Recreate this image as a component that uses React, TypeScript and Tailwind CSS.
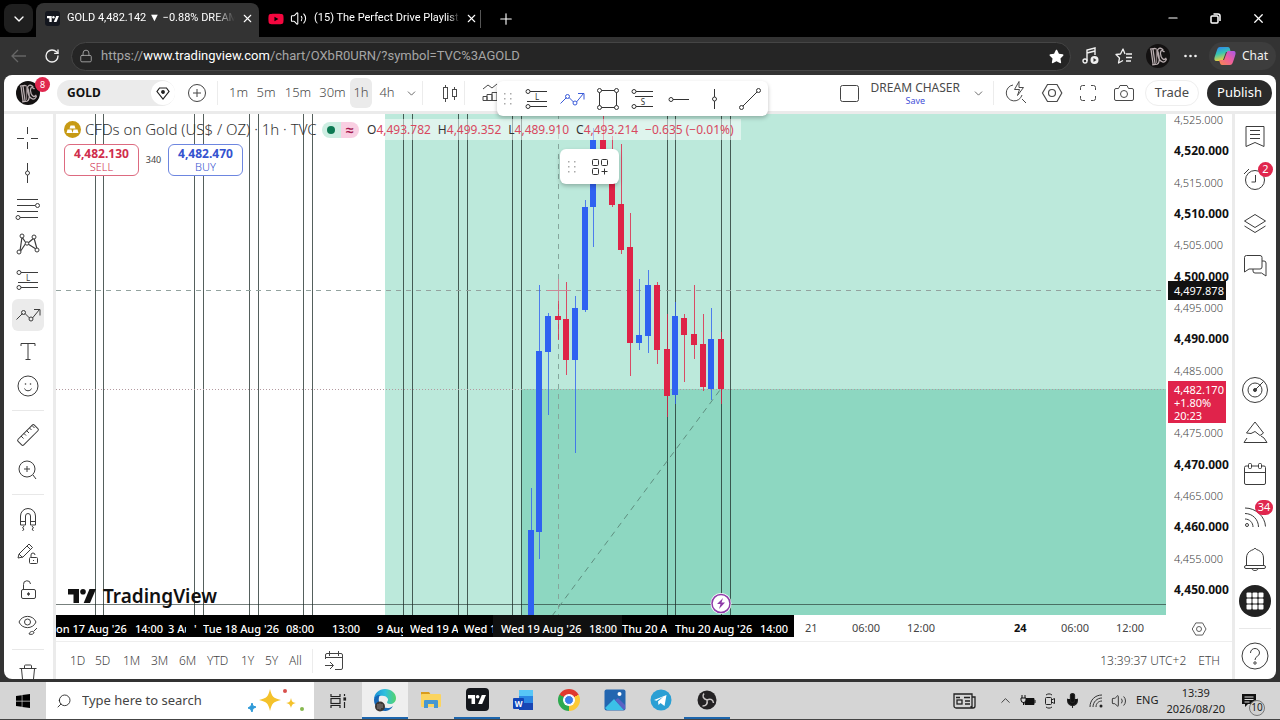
import React from 'react';
import { FaChrome, FaStar, FaWindows, FaYoutube } from 'react-icons/fa';
import { ChevronDown, ChevronUp, Lock, Mic, Minus, Plus, RotateCw, Search, Volume2, X } from 'lucide-react';

interface IconProps {
  size?: number;
  className?: string;
  children: React.ReactNode;
}

// 28-unit grid, same as the drawing tool icons
const Icon: React.FC<IconProps> = ({ size = 28, className, children }) => (
  <svg
    width={size}
    height={size}
    viewBox="0 0 28 28"
    fill="none"
    stroke="currentColor"
    strokeWidth="1"
    className={className}
    aria-hidden="true"
  >
    {children}
  </svg>
);

const CrosshairIcon = () => (
  <Icon><path d="M13.500 3v7M13.500 18v7M3 14.500h7M17 14.500h7" /></Icon>
);

const VerticalLineIcon = () => (
  <Icon><path d="M13.500 4v8M13.500 16v8" /><circle cx="13.500" cy="14" r="2" /></Icon>
);

const HorizontalLineIcon = () => (
  <Icon><path d="M8 14.500h16" /><circle cx="6" cy="14.500" r="2" /></Icon>
);

const TrendLineIcon = () => (
  <Icon><path d="M7 21L21 7" /><circle cx="5.5" cy="22.500" r="2" /><circle cx="22.500" cy="5.5" r="2" /></Icon>
);

const FibIcon = () => (
  <Icon>
    <path d="M3 4.500h21M3 10.500h18M3 16.500h21M6 22.500h18" />
    <circle cx="23.500" cy="10.500" r="2" fill="white" />
    <circle cx="4" cy="22.500" r="2" fill="white" />
  </Icon>
);

const PatternIcon = () => (
  <Icon>
    <path d="M8 7L6 21M8 7l4 6M12 13l-6 9M14 13l6-5M14 14l8 5M20 8l3 11" strokeWidth="1.200" />
    <circle cx="8" cy="6" r="2" fill="white" />
    <circle cx="20" cy="7" r="2" fill="white" />
    <circle cx="13" cy="13.500" r="1.700" fill="white" />
    <circle cx="5" cy="22" r="2" fill="white" />
    <circle cx="23" cy="20" r="2" fill="white" />
  </Icon>
);

const PositionIcon: React.FC<{ letter: string }> = ({ letter }) => (
  <Icon>
    <path d={letter === 'L' ? 'M6 6.500h18M4 16.500h20M6 21.500h18' : 'M6 6.500h18M6 11.500h18M6 21.500h18'} />
    <circle cx="5" cy="6.500" r="2" fill="white" />
    <circle cx="5" cy="21.500" r="2" fill="white" />
    <text
      x="14"
      y={letter === 'L' ? 14.500 : 19.500}
      fontSize="8"
      textAnchor="middle"
      fill="currentColor"
      stroke="none"
      className="font-['Noto_Sans']"
    >
      {letter}
    </text>
  </Icon>
);

const PathIcon = () => (
  <Icon>
    <path d="M2.500 18.500l6-6M11 12.500l4.500 4.500M18.500 17l7-8.500M20 8.500h6v6" />
    <circle cx="9.500" cy="11.500" r="2" />
    <circle cx="17" cy="18" r="2" />
  </Icon>
);

const RectIcon = () => (
  <Icon>
    <path d="M5.500 7v14M22.500 7v14M7 5.500h14M7 22.500h14" />
    <circle cx="5.500" cy="5.500" r="2" fill="white" />
    <circle cx="22.500" cy="5.500" r="2" fill="white" />
    <circle cx="5.500" cy="22.500" r="2" fill="white" />
    <circle cx="22.500" cy="22.500" r="2" fill="white" />
  </Icon>
);

const TextIcon = () => (
  <Icon><path d="M7 9V6.500h14V9M14 6.500v16M11.500 22.500h5" /></Icon>
);

const SmileIcon = () => (
  <Icon>
    <circle cx="14" cy="14" r="10" />
    <path d="M10.500 16.500c1 3 6 3 7 0" />
    <circle cx="11.500" cy="12" r="0.800" fill="currentColor" stroke="none" />
    <circle cx="16.500" cy="12" r="0.800" fill="currentColor" stroke="none" />
  </Icon>
);

const RulerIcon = () => (
  <Icon>
    <rect x="2.500" y="10" width="23" height="8" rx="1.500" transform="rotate(-45 14 14)" />
    <path d="M7 15l2.500 2.500M10 12.500l2 2M12.500 9.500l2.500 2.500M15.500 7l2 2M18 4.500l2.500 2.500" />
  </Icon>
);

const ZoomIcon = () => (
  <Icon><circle cx="13" cy="13" r="8" /><path d="M13 10v6M10 13h6M19 19l3 4" /></Icon>
);

const MagnetIcon = () => (
  <Icon>
    <path d="M6.500 20v-9a7.500 7.500 0 0115 0v9h-5v-9a2.500 2.500 0 00-5 0v9zM6.500 16.500h5M16.500 16.500h5M10 21l-1.500 2 1.500 1-1.500 2M18 21l1.500 2-1.500 1 1.500 2" />
  </Icon>
);

const PencilLockIcon = () => (
  <Icon>
    <path d="M4 18l1-4L15 4l3.500 3.500L9 17zM13 6l3.500 3.500M5 14l3.500 3.500" />
    <rect x="15.500" y="17.500" width="8" height="6" rx="1" />
    <path d="M17 17v-2a2 2 0 014 0M19.500 20v1" />
  </Icon>
);

const UnlockIcon = () => (
  <Icon>
    <rect x="7.500" y="13.500" width="14" height="9" rx="1.500" />
    <path d="M9.500 13V8.500a3.500 3.500 0 017-.500M14.500 16.500v3" />
    <circle cx="14.500" cy="18" r="1" fill="currentColor" />
  </Icon>
);

const EyeIcon = () => (
  <Icon>
    <path d="M5 11c3-7.500 14-7.500 17 0-3 7.500-14 7.500-17 0zM15 23c1-3 4-3 5-2 0 2-2 3-5 2zM20 20l3-3" />
    <circle cx="13.500" cy="11" r="3" />
  </Icon>
);

const TrashIcon = () => (
  <Icon><path d="M5.500 8.500h17M7.500 9l1.500 15h10L20.500 9M10.500 8V6a1 1 0 011-1h5a1 1 0 011 1v2" /></Icon>
);

const WatchlistIcon = () => (
  <Icon><path d="M5 4.500h18v20l-9-4-9 4zM9 8.500h10M9 12.500h10M9 16.500h10" /></Icon>
);

const AlarmIcon = () => (
  <Icon><circle cx="14" cy="15" r="9.500" /><path d="M14.500 10v7h-4M3 9l5-5" /></Icon>
);

const LayersIcon = () => (
  <Icon><path d="M14 5.500l10.500 6.500L14 18.500 3.500 12zM3.500 17L14 23.500 24.500 17" /></Icon>
);

const ChatIcon = () => (
  <Icon><path d="M6 3.500h13a2 2 0 012 2V15a2 2 0 01-2 2H8l-4.500 3V5.500a2 2 0 012-2zM21 9h2a2 2 0 012 2v13l-4.500-3H14a2 2 0 01-2-2v-2" /></Icon>
);

const TargetIcon = () => (
  <Icon>
    <circle cx="14" cy="14" r="12.500" /><circle cx="14" cy="14" r="7" />
    <circle cx="14" cy="14" r="1.500" fill="currentColor" /><path d="M14 14l8.500-8.500" />
  </Icon>
);

const PineIcon = () => (
  <Icon><path d="M5.500 15L14 4l8.500 11-3.500 2.500-5-4-4 2zM6 20l-3 4.500h23L23 20l-3-2" /></Icon>
);

const CalendarIcon = () => (
  <Icon>
    <path d="M7 6H5a1.500 1.500 0 00-1.500 1.500V23A1.500 1.500 0 005 24.500h18a1.500 1.500 0 001.500-1.500V7.500A1.500 1.500 0 0023 6h-2M11 6h6M3.500 12.500h21" />
    <rect x="7.500" y="3.500" width="3" height="5" rx="1" /><rect x="17.500" y="3.500" width="3" height="5" rx="1" />
  </Icon>
);

const RssIcon = () => (
  <Icon>
    <circle cx="6" cy="22" r="1.500" />
    <path d="M4 16c4.500 0 8 3.500 8 8M4 10.500c7.500 0 13.500 6 13.500 13.500M4 5c11 0 20 8.500 20.500 18.500" />
  </Icon>
);

const BellIcon = () => (
  <Icon>
    <path d="M5.500 20.500V13a8.500 8.500 0 015-7.700l2-.800a1.600 1.600 0 013 0l2 .800a8.500 8.500 0 015 7.700v7.500M11 24c1 2 5 2 6 0" />
    <rect x="3.500" y="20.500" width="21" height="3" rx="1.500" />
  </Icon>
);

const AppsIcon = () => (
  <svg width="32" height="32" viewBox="0 0 32 32" aria-hidden="true">
    <circle cx="16" cy="16" r="16" fill="#222" />
    {[8, 14, 20].map((y) => [8, 14, 20].map((x) => (
      <rect key={`${x}-${y}`} x={x - 0.500} y={y - 0.500} width="5" height="5" rx="1" fill="white" />
    )))}
  </svg>
);

const HelpIcon = () => (
  <Icon>
    <circle cx="14" cy="14" r="13" /><path d="M9.500 11c0-6 9-6 9 0 0 3.500-4.500 3-4.500 7" />
    <circle cx="14" cy="21" r="1.200" />
  </Icon>
);

const HexSettingsIcon: React.FC<{ size?: number }> = ({ size }) => (
  <Icon size={size}>
    <path d="M9.500 5.500h9.500L23.800 14 19 22.500H9.500L4.500 14z" strokeWidth="1.200" /><circle cx="14" cy="14" r="3.500" strokeWidth="1.200" />
  </Icon>
);

const DotGrip = () => (
  <svg width="8" height="14" viewBox="0 0 8 14" fill="#aaa" aria-hidden="true">
    {[1, 6, 11].map((y) => [0, 6].map((x) => <rect key={`${x}-${y}`} x={x} y={y} width="1.500" height="1.500" />))}
  </svg>
);

const TradingViewMark: React.FC<{ className?: string; width: number }> = ({ className, width }) => (
  <svg width={width} height={width / 2} viewBox="0 0 28 14" fill="currentColor" className={className} aria-hidden="true">
    <path d="M0 0h11v14H5.500V5.500H0z" /><circle cx="15" cy="2.800" r="2.800" /><path d="M21.500 0H28l-6 14h-6.300z" />
  </svg>
);

const Avatar: React.FC = () => (
  <svg width="24" height="24" viewBox="0 0 24 24" aria-hidden="true">
    <circle cx="12" cy="12" r="12" fill="#131111" />
    <g fill="none" stroke="#b9aeb0" strokeWidth="1.300">
      <path d="M6 4v16M8 4v16M5 4h5c4 1 4 15 0 16H5M18 7c-3-5-7-2-6 5 1 7 6 9 8 4M19 9c-3-4-5-1-4 4 1 4 3 4 5 2" transform="rotate(-8 12 12)" />
      <path d="M10.500 5v14" stroke="#7d7274" />
    </g>
  </svg>
);

const CopilotIcon = () => (
  <svg width="22" height="20" viewBox="0 0 22 20" aria-hidden="true">
    <defs>
      <linearGradient id="copilotA" x1="0" y1="0" x2="0.300" y2="1">
        <stop offset="0" stopColor="#2f7df6" /><stop offset="0.500" stopColor="#35c5b2" /><stop offset="1" stopColor="#f2d13a" />
      </linearGradient>
      <linearGradient id="copilotB" x1="1" y1="0" x2="0" y2="1">
        <stop offset="0" stopColor="#a557ea" /><stop offset="0.500" stopColor="#ee5f9d" /><stop offset="1" stopColor="#f78b4b" />
      </linearGradient>
    </defs>
    <path d="M6 1h8c2 0 2 3 3 5H12l-3 8c-1 2-2 1-4 1H3c-3 0-3-2-2-5l2-6c.600-2 1.500-3 3-3z" fill="url(#copilotA)" />
    <path d="M16 19H8c-2 0-2-3-3-5h5l3-8c1-2 2-1 4-1h2c3 0 3 2 2 5l-2 6c-.600 2-1.500 3-3 3z" fill="url(#copilotB)" />
  </svg>
);

const ToolButton: React.FC<{ label: string; active?: boolean; children: React.ReactNode }> = ({ label, active, children }) => (
  <div className="flex flex-1 items-center justify-center">
    <button aria-label={label} className={`flex size-8 items-center justify-center rounded-md ${active ? 'bg-[#ebebeb]' : ''}`}>
      {children}
    </button>
  </div>
);

const BrowserTabs: React.FC = () => (
  <div className="flex h-[37px] shrink-0 items-end bg-black font-['Roboto',sans-serif] text-[11px] text-white">
    <button aria-label="Tab actions" className="mb-1 ml-1 flex size-[29px] items-center justify-center rounded-lg bg-[#1f1f1f]">
      <ChevronDown size={16} />
    </button>
    <div className="ml-[3px] flex h-[34px] w-[223px] items-center rounded-t-lg bg-[#333] pb-[3px] pl-[9px]">
      <span className="flex size-[15px] items-center justify-center rounded-[3px] bg-[#14171f]"><TradingViewMark width={12} /></span>
      <span className="ml-[7px] w-[168px] overflow-hidden whitespace-nowrap [mask-image:linear-gradient(to_right,black_88%,transparent)]">
        GOLD 4,482.142 ▼ −0.88% DREAM
      </span>
      <button aria-label="Close tab" className="ml-[6px]"><X size={13} /></button>
    </div>
    <div className="flex h-[34px] items-center pb-[3px] pl-[9px]">
      <FaYoutube size={16} className="text-[#f4073f]" />
      <Volume2 size={17} strokeWidth={1.5} className="ml-[6px]" />
      <span className="ml-[7px] w-[146px] overflow-hidden whitespace-nowrap [mask-image:linear-gradient(to_right,black_92%,transparent)]">
        (15) The Perfect Drive Playlist |
      </span>
      <button aria-label="Close tab" className="ml-[5px]"><X size={13} /></button>
      <span className="ml-[2px] h-[18px] w-px bg-[#555]" />
      <button aria-label="New tab" className="ml-4"><Plus size={18} strokeWidth={1.5} /></button>
    </div>
    <div className="mb-2 ml-auto flex h-[22px] items-center gap-7 pr-[14px]">
      <button aria-label="Minimize"><Minus size={14} /></button>
      <button aria-label="Restore">
        <svg width="15" height="15" viewBox="0 0 15 15" fill="none" stroke="white" strokeWidth="1.500">
          <rect x="3" y="5" width="7" height="7" rx="1" /><path d="M5.500 3h4.500a2 2 0 012 2v5" />
        </svg>
      </button>
      <button aria-label="Close window"><X size={15} /></button>
    </div>
  </div>
);

const AddressBar: React.FC = () => (
  <div className="flex h-[38px] shrink-0 items-center bg-[#333] pl-[11px] pr-1 text-[#f1f1f1]">
    <button aria-label="Back" className="text-[#666]">
      <svg width="16" height="14" viewBox="0 0 16 14" fill="none" stroke="currentColor" strokeWidth="1.300"><path d="M15 7H1.500M7 1L1 7l6 6" /></svg>
    </button>
    <button aria-label="Refresh" className="ml-[17px]"><RotateCw size={16} /></button>
    <div className="ml-[11px] flex h-[29px] flex-1 items-center rounded-full border border-[#454545] bg-[#252525] pl-[7px] pr-[6px]">
      <Lock size={14} strokeWidth={1.5} className="text-[#aaa]" />
      <div className="ml-2 flex-1 whitespace-nowrap font-['Roboto',sans-serif] text-[13px] text-[#a5a5a5]">
        https://<span className="text-white">www.tradingview.com</span>/chart/OXbR0URN/?symbol=TVC%3AGOLD
      </div>
      <FaStar size={15} className="text-white" />
    </div>
    <button aria-label="Media" className="ml-[11px]">
      <svg width="18" height="18" viewBox="0 0 18 18" fill="none" stroke="currentColor" strokeWidth="1.400">
        <path d="M5 14V3l8-2v7M5 6l8-2" /><circle cx="3" cy="14" r="2" /><circle cx="12.500" cy="13" r="4" fill="currentColor" stroke="none" />
        <path d="M11.500 11v4l3-2z" fill="#333" stroke="none" />
      </svg>
    </button>
    <button aria-label="Favorites" className="ml-[15px]">
      <svg width="18" height="18" viewBox="0 0 18 18" fill="none" stroke="currentColor" strokeWidth="1.300" strokeLinejoin="round">
        <path d="M10 7L8 2 5.500 7 1 7.500l3.500 3.500-1 5L8 13.500M11 7h6M11 10.500h6M11 14h5" />
      </svg>
    </button>
    <button aria-label="Profile" className="ml-[13px]"><Avatar /></button>
    <button aria-label="More" className="ml-[14px]">
      <svg width="13" height="4" viewBox="0 0 13 4" fill="currentColor"><circle cx="1.500" cy="2" r="1.300" /><circle cx="6.500" cy="2" r="1.300" /><circle cx="11.500" cy="2" r="1.300" /></svg>
    </button>
    <button className="ml-3 flex h-[28px] items-center gap-[6px] rounded-full bg-[#3d3d3d] pl-[5px] pr-2 text-xs">
      <CopilotIcon />Chat
    </button>
  </div>
);

const Divider = ({ className = '' }: { className?: string }) => <span className={`h-6 w-px bg-[#ececec] ${className}`} />;

const ChartHeader: React.FC = () => (
  <header className="relative flex h-9 shrink-0 items-center pl-3 pr-1 text-[13px] text-[#4a4a4a]">
    <button aria-label="User menu" className="relative">
      <Avatar />
      <span className="absolute -right-[10px] -top-1 flex size-[15px] items-center justify-center rounded-full bg-[#e0274e] text-[9px] text-white">8</span>
    </button>
    <div className="ml-[17px] flex h-[26px] w-[118px] items-center justify-between rounded-full bg-[#ebebeb] pl-[10px]">
      <button className="text-xs font-bold text-[#111]">GOLD</button>
      <span className="flex size-6 items-center justify-center rounded-full bg-white">
        <svg width="14" height="13" viewBox="0 0 14 13" fill="none" stroke="#222" strokeWidth="1.200">
          <path d="M3.500 1h7L13 4.500 7 12 1 4.500z" /><circle cx="7" cy="5" r="1.300" fill="#222" />
        </svg>
      </span>
    </div>
    <button aria-label="Compare symbol" className="ml-3">
      <svg width="20" height="20" viewBox="0 0 20 20" fill="none" stroke="#444"><circle cx="10" cy="10" r="8.500" /><path d="M10 6v8M6 10h8" /></svg>
    </button>
    <Divider className="ml-[10px]" />
    <div className="ml-[7px] flex items-center font-light">
      <button className="w-[27px]">1m</button>
      <button className="w-7">5m</button>
      <button className="w-9">15m</button>
      <button className="w-[33px]">30m</button>
      <button className="mx-px h-[30px] w-[22px] rounded-md bg-[#ebebeb]">1h</button>
      <button className="w-[28px]">4h</button>
    </div>
    <button aria-label="More intervals" className="ml-1"><ChevronDown size={13} strokeWidth={1.5} /></button>
    <Divider className="ml-1" />
    <button aria-label="Candles" className="ml-[13px]">
      <Icon><path d="M9.500 6v3M9.500 19v4M18.500 8v3M18.500 17v4" /><rect x="7.500" y="8.500" width="4" height="11" /><rect x="16.500" y="10.500" width="4" height="7" /></Icon>
    </button>
    <Divider />
    <button aria-label="Indicators" className="ml-3">
      <Icon><path d="M6 10l5-4 4 3 5-4M6 21.500h4v-4H6zM10 21.500h5v-6h-5zM15 21.500h5v-8h-5z" /></Icon>
    </button>

    <button aria-label="Layout setup" className="ml-auto">
      <svg width="19" height="17" viewBox="0 0 19 17" fill="none" stroke="#444"><rect x="0.500" y="0.500" width="18" height="16" rx="2" /></svg>
    </button>
    <button className="ml-3 flex flex-col items-center">
      <span className="text-xs leading-[14px]">DREAM CHASER</span>
      <span className="text-[9px] leading-[11px] text-[#4450d8]">Save</span>
    </button>
    <button aria-label="Manage layouts" className="ml-3"><ChevronDown size={13} strokeWidth={1.5} /></button>
    <Divider className="ml-2" />
    <div className="ml-2 flex items-center gap-2">
      <button aria-label="Quick search">
        <Icon><path d="M11 6a8 8 0 109 10M20 20l4 4M17 2.500l-4.500 8h5l-2 6 6-8h-4.500z" /></Icon>
      </button>
      <button aria-label="Settings"><HexSettingsIcon /></button>
      <button aria-label="Fullscreen">
        <Icon><path d="M6.500 11V8.500a2 2 0 012-2H11M17 6.500h2.500a2 2 0 012 2V11M21.500 17v2.500a2 2 0 01-2 2H17M11 21.500H8.500a2 2 0 01-2-2V17" /></Icon>
      </button>
      <button aria-label="Snapshot">
        <Icon><path d="M10 6.500h7l1.500 3H22a1.500 1.500 0 011.500 1.500v9a1.500 1.500 0 01-1.500 1.500H6A1.500 1.500 0 014.500 20v-9A1.500 1.500 0 016 9.500h2.500z" /><circle cx="14" cy="15" r="3.500" /></Icon>
      </button>
    </div>
    <button className="ml-[7px] h-[26px] w-[54px] rounded-full border border-[#eee]">Trade</button>
    <button className="ml-2 h-[26px] w-[65px] rounded-full bg-[#2a2a2a] text-white">Publish</button>

    {/* floating favourites toolbar */}
    <div className="absolute left-[493px] top-[6px] z-20 flex h-[35px] w-[271px] items-center rounded-md bg-white pl-[7px] shadow-[0_2px_4px_rgba(0,0,0,0.25)]">
      <DotGrip />
      <div className="ml-[7px] flex flex-1 items-center justify-around text-[#333]">
        <button aria-label="Long position"><PositionIcon letter="L" /></button>
        <button aria-label="Path" className="text-[#3a5bd9]"><PathIcon /></button>
        <button aria-label="Rectangle"><RectIcon /></button>
        <button aria-label="Short position"><PositionIcon letter="S" /></button>
        <button aria-label="Horizontal ray"><HorizontalLineIcon /></button>
        <button aria-label="Vertical line"><VerticalLineIcon /></button>
        <button aria-label="Trend line"><TrendLineIcon /></button>
      </div>
    </div>
  </header>
);

const LeftToolbar: React.FC = () => (
  <nav aria-label="Drawing tools" className="flex w-[49px] shrink-0 flex-col overflow-hidden pr-px pt-[6px] text-[#3c3c3c]">
    <div className="flex h-[284px] shrink-0 flex-col">
      <ToolButton label="Cross"><CrosshairIcon /></ToolButton>
      <ToolButton label="Vertical line"><VerticalLineIcon /></ToolButton>
      <ToolButton label="Fib retracement"><FibIcon /></ToolButton>
      <ToolButton label="XABCD pattern"><PatternIcon /></ToolButton>
      <ToolButton label="Long position"><PositionIcon letter="L" /></ToolButton>
      <ToolButton label="Path" active><PathIcon /></ToolButton>
      <ToolButton label="Text"><TextIcon /></ToolButton>
      <ToolButton label="Emojis"><SmileIcon /></ToolButton>
    </div>
    <hr className="mx-2 my-[6px] border-[#e8e8e8]" />
    <div className="flex h-[71px] shrink-0 flex-col">
      <ToolButton label="Measure"><RulerIcon /></ToolButton>
      <ToolButton label="Zoom in"><ZoomIcon /></ToolButton>
    </div>
    <hr className="mx-2 my-[6px] border-[#e8e8e8]" />
    <div className="flex h-[142px] shrink-0 flex-col">
      <ToolButton label="Magnet mode"><MagnetIcon /></ToolButton>
      <ToolButton label="Stay in drawing mode"><PencilLockIcon /></ToolButton>
      <ToolButton label="Lock all drawings"><UnlockIcon /></ToolButton>
      <ToolButton label="Hide all drawings"><EyeIcon /></ToolButton>
    </div>
    <hr className="mx-2 my-[6px] border-[#e8e8e8]" />
    <div className="flex h-9 shrink-0 flex-col">
      <ToolButton label="Remove objects"><TrashIcon /></ToolButton>
    </div>
  </nav>
);

const RightSidebar: React.FC = () => (
  <aside className="flex w-[41px] shrink-0 flex-col pr-px text-[#3c3c3c]">
    <div className="flex h-[174px] flex-col">
      <ToolButton label="Watchlist"><WatchlistIcon /></ToolButton>
      <div className="relative flex flex-1">
        <ToolButton label="Alerts"><AlarmIcon /></ToolButton>
        <span className="absolute right-[2px] top-1 flex size-[15px] items-center justify-center rounded-full bg-[#e0274e] text-[11px] text-white">2</span>
      </div>
      <ToolButton label="Object tree"><LayersIcon /></ToolButton>
      <ToolButton label="Chats"><ChatIcon /></ToolButton>
    </div>
    <div className="mt-auto flex h-[253px] flex-col">
      <ToolButton label="Screeners"><TargetIcon /></ToolButton>
      <ToolButton label="Pine"><PineIcon /></ToolButton>
      <ToolButton label="Calendars"><CalendarIcon /></ToolButton>
      <div className="relative flex flex-1">
        <ToolButton label="News feed"><RssIcon /></ToolButton>
        <span className="absolute right-[2px] top-1 flex h-[15px] w-[18px] items-center justify-center rounded-full bg-[#e0274e] text-[11px] text-white">34</span>
      </div>
      <ToolButton label="Notifications"><BellIcon /></ToolButton>
      <ToolButton label="Products"><AppsIcon /></ToolButton>
    </div>
    <hr className="mx-1 my-[6px] border-[#e8e8e8]" />
    <div className="mb-[2px] flex h-[42px] flex-col">
      <ToolButton label="Help"><HelpIcon /></ToolButton>
    </div>
  </aside>
);

const BLUE = '#2f62f1';
const RED = '#de2347';

// x, wick top, body top, body bottom, wick bottom, rising
const candles: [number, number, number, number, number, boolean][] = [
  [475, 374, 416, 502, 502, true],
  [483, 171, 237, 418, 445, true],
  [492, 199, 202, 238, 301, true],
  [502, 186, 202, 206, 226, false],
  [510, 168, 205, 246, 261, false],
  [519, 182, 194, 246, 339, true],
  [529, 86, 93, 196, 198, true],
  [537, 14, 26, 93, 133, true],
  [547, 0, 26, 50, 55, false],
  [556, 22, 62, 91, 93, false],
  [565, 30, 90, 136, 140, false],
  [574, 99, 133, 229, 262, false],
  [583, 165, 221, 229, 236, true],
  [592, 156, 171, 222, 239, true],
  [601, 168, 171, 236, 250, false],
  [611, 200, 235, 282, 303, false],
  [619, 188, 202, 281, 290, true],
  [628, 200, 204, 221, 268, false],
  [638, 171, 220, 231, 245, false],
  [647, 200, 230, 273, 277, false],
  [655, 194, 225, 275, 286, true],
  [665, 218, 225, 275, 290, false],
];

const sessionLines = [39, 47, 138, 147, 193, 202, 247, 256, 347, 356, 402, 411, 456, 465, 611, 619, 665, 674];

const CandleChart: React.FC = () => (
  <svg width="100%" height="100%" className="block" role="img" aria-label="Gold hourly candles" shapeRendering="crispEdges">
    <rect x="329" y="0" width="100%" height="100%" fill="#bce9db" />
    <rect x="465" y="275" width="100%" height="100%" fill="#8dd7c1" />
    {sessionLines.map((x) => (
      <line key={x} x1={x + 0.500} x2={x + 0.500} y1="0" y2="100%" stroke="#1c2b27" strokeOpacity="0.750" />
    ))}
    <line x1="0" x2="100%" y1="490" y2="490" stroke="#1c2b27" strokeOpacity="0.600" />
    <line x1="0" x2="100%" y1="176.500" y2="176.500" stroke="#93a39f" strokeDasharray="5 5" />
    <line x1="502" x2="502" y1="0" y2="100%" stroke="#86a69c" strokeDasharray="5 5" />
    <line x1="0" x2="100%" y1="275" y2="275" stroke="#b39aa0" strokeDasharray="1 2" />
    <line x1="496" x2="664" y1="502" y2="276" stroke="#5f8f80" strokeDasharray="6 5" shapeRendering="auto" />
    {candles.map(([x, high, top, bottom, low, up]) => (
      <g key={x} fill={up ? BLUE : RED}>
        <rect x={x} y={high} width="1" height={low - high} opacity="0.800" />
        <rect x={x - 3} y={top} width="6" height={bottom - top} />
      </g>
    ))}
    <path d="M491 176h23M502.500 165v22" stroke="#c98a97" />
    <g shapeRendering="auto">
      <circle cx="665" cy="489.500" r="10.500" fill="white" />
      <circle cx="665" cy="489.500" r="9" fill="white" stroke="#8e3ba8" strokeWidth="1.500" />
      <path d="M667 484l-6 6h3.500l-1.500 5 6-6.500h-3.500z" fill="#8e3ba8" />
    </g>
  </svg>
);

const ohlc = [
  ['O', '4,493.782'],
  ['H', '4,499.352'],
  ['L', '4,489.910'],
  ['C', '4,493.214'],
];

const ChartPane: React.FC = () => (
  <div className="relative min-w-0 flex-1 overflow-hidden">
    <CandleChart />
    <div className="absolute left-2 top-[5px] flex h-[21px] items-center whitespace-nowrap">
      <svg width="17" height="17" viewBox="0 0 17 17" aria-hidden="true">
        <circle cx="8.500" cy="8.500" r="8.500" fill="#c79a14" />
        <path d="M6.500 4.500h4l1 3h-6zM3.500 8.500h4l1 3.500H2.500zM9.500 8.500h4l1 3.500h-6z" fill="white" />
      </svg>
      <span className="ml-1 w-[233px] text-[15px] font-light text-[#333]">CFDs on Gold (US$ / OZ) · 1h · TVC</span>
      <span className="ml-1 flex h-4 w-[37px] overflow-hidden rounded-full">
        <span className="flex flex-1 items-center justify-center bg-[#cdeee2]"><span className="size-2 rounded-full bg-[#0c7a53]" /></span>
        <span className="flex flex-1 items-center justify-center bg-[#f9cfe2] text-sm font-bold leading-4 text-[#a5184f]">≈</span>
      </span>
      <span className="ml-[6px] flex h-[21px] items-center gap-[7px] bg-white/50 pl-[2px] pr-[7px] text-xs text-[#d8485f]">
        {ohlc.map(([key, value]) => (
          <span key={key}><span className="text-[#333]">{key}</span>{value}</span>
        ))}
        <span>−0.635 (−0.01%)</span>
      </span>
    </div>
    <div className="absolute left-2 top-[30px] flex items-center">
      <button className="flex h-8 w-[75px] flex-col items-center justify-center rounded-md border border-[#dd6a80] bg-white text-[11px] leading-[13px] text-[#d02d4c]">
        <span className="text-xs font-bold leading-[13px]">4,482.130</span>
        <span className="font-light">SELL</span>
      </button>
      <span className="w-[29px] text-center text-[9px] text-[#444]">340</span>
      <button className="flex h-8 w-[75px] flex-col items-center justify-center rounded-md border border-[#6d86e0] bg-white text-[11px] leading-[13px] text-[#3553cf]">
        <span className="text-xs font-bold leading-[13px]">4,482.470</span>
        <span className="font-light">BUY</span>
      </button>
    </div>
    <div className="absolute left-[504px] top-[35px] flex h-[35px] w-[59px] items-center rounded-md bg-white pl-2 shadow-[0_2px_4px_rgba(0,0,0,0.25)]">
      <DotGrip />
      <button aria-label="Add template" className="ml-[10px] text-[#333]">
        <Icon><path d="M7.500 6.500h4a1 1 0 011 1v4a1 1 0 01-1 1h-4a1 1 0 01-1-1v-4a1 1 0 011-1zM16.500 6.500h4a1 1 0 011 1v4a1 1 0 01-1 1h-4a1 1 0 01-1-1v-4a1 1 0 011-1zM7.500 15.500h4a1 1 0 011 1v4a1 1 0 01-1 1h-4a1 1 0 01-1-1v-4a1 1 0 011-1zM18.500 15.500v6M15.500 18.500h6" /></Icon>
      </button>
    </div>
    <div className="absolute bottom-[6px] left-3 flex items-center gap-[7px] text-[#111]">
      <TradingViewMark width={28} />
      <span className="text-[19px] font-semibold leading-[26px]">TradingView</span>
    </div>
  </div>
);

// the empty slot sits under the last price tag
const prices = [
  '4,525.000', '4,520.000', '4,515.000', '4,510.000', '4,505.000', '4,500.000', '4,495.000', '4,490.000',
  '4,485.000', '', '4,475.000', '4,470.000', '4,465.000', '4,460.000', '4,455.000', '4,450.000',
];

const PriceAxis: React.FC = () => (
  <div className="relative flex w-[66px] shrink-0 flex-col justify-between pb-[19px] pl-2 text-[11px] leading-3">
    {prices.map((price, i) => (
      <span key={i} className={`h-3 ${price.endsWith('0.000') ? 'text-xs leading-3 font-bold text-[#111]' : 'font-light text-[#444]'}`}>{price}</span>
    ))}
    <span className="absolute left-[2px] top-[167px] flex h-[19px] w-[58px] items-center bg-[#111] pl-[6px] text-white">4,497.878</span>
    <span className="absolute left-[2px] top-[267px] flex h-[42px] w-[58px] flex-col justify-center bg-[#e0234b] pl-[6px] leading-[13px] text-white">
      <span>4,482.170</span><span>+1.80%</span><span>20:23</span>
    </span>
  </div>
);

const timeCells = [
  { text: 'on 17 Aug \'26', cls: 'w-[79px]' },
  { text: '14:00', cls: 'w-[33px]' },
  { text: '3 Aug', cls: 'w-[18px]' },
  { text: '\'', cls: 'w-2 ml-2 mr-px' },
  { text: 'Tue 18 Aug \'26', cls: 'w-[83px]' },
  { text: '08:00', cls: 'w-[46px]' },
  { text: '13:00', cls: 'w-[45px]' },
  { text: '9 Aug', cls: 'w-[26px] mr-[7px]' },
  { text: 'Wed 19 Aug', cls: 'w-[48px] mr-[6px]' },
  { text: 'Wed 19', cls: 'w-[29px]' },
];

const nearCells = [
  { text: 'Wed 19 Aug \'26', cls: 'w-[88px]' },
  { text: '18:00', cls: 'w-[33px]' },
];

const lastCells = [
  { text: 'Thu 20 Aug', cls: 'w-[45px] mr-2' },
  { text: 'Thu 20 Aug \'26', cls: 'w-[85px]' },
  { text: '14:00', cls: 'w-[34px]' },
];

const futureCells = [
  { text: '21', cls: 'w-[47px]' },
  { text: '06:00', cls: 'w-[55px]' },
  { text: '12:00', cls: 'w-[107px]' },
  { text: '24', cls: 'w-[47px] font-bold text-[#111]' },
  { text: '06:00', cls: 'w-[55px]' },
  { text: '12:00', cls: 'w-[55px]' },
];

const TimeCells: React.FC<{ cells: { text: string; cls: string }[]; className: string }> = ({ cells, className }) => (
  <div className={`flex shrink-0 items-center overflow-hidden whitespace-nowrap ${className}`}>
    {cells.map((cell, i) => (
      <span key={i} className={`shrink-0 overflow-hidden ${cell.cls}`}>{cell.text}</span>
    ))}
  </div>
);

const TimeAxis: React.FC = () => (
  <div className="flex h-[27px] shrink-0 items-start border-b border-[#eee] text-[11px]">
    <TimeCells cells={timeCells} className="h-[22px] w-[437px] bg-black pt-[6px] font-medium text-white" />
    <TimeCells cells={nearCells} className="h-[22px] w-[129px] bg-[#101010] pl-2 pt-[6px] font-medium text-white" />
    <TimeCells cells={lastCells} className="h-[22px] w-[172px] bg-black pt-[6px] font-medium text-white" />
    <TimeCells cells={futureCells} className="h-[26px] pl-[11px] text-[#444]" />
    <button aria-label="Axis settings" className="ml-auto mr-[23px] mt-1 text-[#444]"><HexSettingsIcon size={20} /></button>
  </div>
);

const RangeBar: React.FC = () => (
  <div className="flex h-[37px] shrink-0 items-center pl-[14px] pr-3 text-xs font-light text-[#444]">
    <button className="w-[25px] text-left">1D</button>
    <button className="w-7 text-left">5D</button>
    <button className="w-7 text-left">1M</button>
    <button className="w-7 text-left">3M</button>
    <button className="w-7 text-left">6M</button>
    <button className="w-[34px] text-left">YTD</button>
    <button className="w-6 text-left">1Y</button>
    <button className="w-6 text-left">5Y</button>
    <button className="w-[23px] text-left">All</button>
    <Divider />
    <button aria-label="Go to date" className="ml-[7px]">
      <Icon><path d="M5.500 12V8a1.500 1.500 0 011.500-1.500h14A1.500 1.500 0 0122.500 8v13a1.500 1.500 0 01-1.500 1.500h-6M5.500 10.500h17M9.500 4v5M18.500 4v5M5 18.500h8M10 15l3.500 3.500L10 22" /></Icon>
    </button>
    <button className="ml-auto">13:39:37 UTC+2</button>
    <button className="ml-3">ETH</button>
  </div>
);

const EdgeLogo = () => (
  <svg width="24" height="24" viewBox="0 0 24 24" aria-hidden="true">
    <defs><linearGradient id="edge" x1="0" y1="0.300" x2="1" y2="0.300"><stop offset="0" stopColor="#1b8fd6" /><stop offset="0.500" stopColor="#2fc0de" /><stop offset="1" stopColor="#55d46b" /></linearGradient></defs>
    <path d="M1 12C1 5 6 1 12 1s11 4 11 9c0 4-3 6-6 6-2 0-3-1-3-2 1-1 1-2 1-3-1-3-5-4-8-3-3 0-6 2-6 4z" fill="url(#edge)" />
    <path d="M1 12c0-3 3-5 6-5-2 3-2 9 3 12 4 2 8 1 10-1-2 4-6 5-8 5C6 23 1 18 1 12z" fill="#1668b8" />
    <circle cx="7" cy="18.500" r="5" fill="#3c3634" /><path d="M5 16v5M7 15.500v6M9 16v4" stroke="#8d8582" />
  </svg>
);

const ExplorerLogo = () => (
  <svg width="22" height="20" viewBox="0 0 22 20" aria-hidden="true">
    <path d="M1 2h8l2 3H1z" fill="#d99b1c" /><rect x="1" y="4" width="20" height="13" rx="1" fill="#fbd45f" />
    <path d="M4 18v-7a1 1 0 011-1h12a1 1 0 011 1v7h-4v-4H8v4z" fill="#4797d0" />
  </svg>
);

const WordLogo = () => (
  <svg width="21" height="22" viewBox="0 0 21 22" aria-hidden="true">
    <path d="M6 1h14v7H6z" fill="#57c6f7" /><path d="M6 7h14v7H6z" fill="#2b87e3" /><path d="M6 14h14v7H6z" fill="#1846b4" />
    <rect y="9" width="11" height="11" rx="1" fill="#1245b8" />
    <text x="5.500" y="17.500" fontSize="8" fontWeight="bold" fill="white" textAnchor="middle" className="font-['Noto_Sans']">W</text>
  </svg>
);

const ChromeLogo = () => (
  <span className="relative flex size-[22px] items-center justify-center rounded-full bg-[conic-gradient(from_-60deg,#e0392d_0_120deg,#fcc934_120deg_240deg,#2da94f_240deg_360deg)]">
    <FaChrome size={22} className="text-transparent" />
    <span className="absolute size-[10px] rounded-full border border-white bg-[#3b7de8] ring-1 ring-white" />
  </span>
);

const PhotosLogo = () => (
  <svg width="22" height="22" viewBox="0 0 22 22" aria-hidden="true">
    <rect x="0.500" y="0.500" width="21" height="21" rx="2" fill="#2366b0" /><path d="M1 19l9-9 10 11H3z" fill="#3bc0e8" />
    <path d="M11 11l3-2 7 7v4l-1 1z" fill="#5a62c4" /><circle cx="15.500" cy="5" r="2" fill="white" />
  </svg>
);

const TelegramLogo = () => (
  <svg width="22" height="22" viewBox="0 0 22 22" aria-hidden="true">
    <circle cx="11" cy="11" r="10.500" fill="#2a9fd4" /><path d="M4 11l12.500-5-2 11-4-3-2 2-.500-3.500 5.500-5-7 4.300z" fill="white" />
  </svg>
);

const ObsLogo = () => (
  <svg width="20" height="20" viewBox="0 0 20 20" aria-hidden="true">
    <circle cx="10" cy="10" r="9.500" fill="#242224" />
    <g fill="none" stroke="#c9c5c5" strokeWidth="1.500"><path d="M10 10c-4-1-5-4-3-6.500M10 10c4-2 6 0 6.500 3M10 10c1 4-1 6-4.500 6" /></g>
  </svg>
);

const taskbarApps = [
  { name: 'Edge', icon: <EdgeLogo />, cls: 'bg-[#efefef] border-b-[#1d66ad]' },
  { name: 'File Explorer', icon: <ExplorerLogo />, cls: 'border-b-transparent' },
  { name: 'TradingView', icon: <span className="flex size-[23px] items-center justify-center rounded-[4px] bg-[#14171c] text-white"><TradingViewMark width={18} /></span>, cls: 'border-b-[#1d66ad]' },
  { name: 'Word', icon: <WordLogo />, cls: 'border-b-transparent' },
  { name: 'Chrome', icon: <ChromeLogo />, cls: 'border-b-transparent' },
  { name: 'Photos', icon: <PhotosLogo />, cls: 'border-b-transparent' },
  { name: 'Telegram', icon: <TelegramLogo />, cls: 'border-b-transparent' },
  { name: 'OBS Studio', icon: <ObsLogo />, cls: 'border-b-[#1d66ad]' },
];

const Taskbar: React.FC = () => (
  <footer className="flex h-[38px] shrink-0 border-b border-[#444] bg-[#d5d5d5] text-[#222]">
    <button aria-label="Start" className="flex w-[46px] items-center justify-center"><FaWindows size={16} className="text-black" /></button>
    <label className="flex w-[268px] items-center bg-white pl-[10px] pr-2">
      <Search size={16} strokeWidth={1.3} className="-scale-x-100" />
      <input
        type="text"
        aria-label="Search"
        placeholder="Type here to search"
        className="ml-[10px] min-w-0 flex-1 text-[13px] outline-none placeholder:text-[#444]"
      />
      <svg width="60" height="26" viewBox="0 0 60 26" aria-hidden="true">
        <path d="M24 1c2 8 3 9 11 11-8 2-9 3-11 11-2-8-3-9-11-11 8-2 9-3 11-11z" fill="#f4c22b" />
        <path d="M45 10c1 4 1.500 4.500 5 5-3.500 1-4 1.500-5 5-1-3.500-1.500-4-5-5 3.500-.500 4-1 5-5z" fill="#f4c22b" />
        <path d="M6 15l1 3 3 1-3 1.500L6 24l-1.500-3L2 20l3-2z" fill="#2f9ad8" stroke="#2f9ad8" />
        <circle cx="39" cy="3" r="2" fill="#d8504c" /><circle cx="56" cy="21" r="2" fill="#86b84e" />
      </svg>
    </label>
    <button aria-label="Task view" className="flex w-12 items-center justify-center">
      <svg width="18" height="16" viewBox="0 0 18 16" fill="none" stroke="#222" strokeWidth="1.200"><path d="M2 1v2.500h9V1M2 15v-2.500h9V15M15.500 1v2M15.500 9v6" /><rect x="2" y="5.500" width="9" height="5" /><rect x="15" y="5" width="1.500" height="2" fill="#222" /></svg>
    </button>
    {taskbarApps.map((app) => (
      <button key={app.name} aria-label={app.name} className={`flex w-[46px] items-center justify-center border-b-2 ${app.cls}`}>
        {app.icon}
      </button>
    ))}
    <div className="ml-auto flex items-center pr-[14px] text-[11px]">
      <svg width="23" height="16" viewBox="0 0 23 16" fill="none" stroke="#222" strokeWidth="1.300" aria-hidden="true"><path d="M1 1h18v14H3a2 2 0 01-2-2zM19 4h3v9a2 2 0 01-4 0M11 4.500h6M12 8h5M12 11h5M3 4.500h4" /><rect x="4" y="7" width="5" height="4" /></svg>
      <ChevronUp size={15} strokeWidth={1.3} className="ml-[22px]" />
      <svg width="16" height="12" viewBox="0 0 16 12" className="ml-[7px]" aria-hidden="true"><path d="M5 3.500h9v6H5z" fill="#111" stroke="#111" /><path d="M14.500 5h1v3h-1z" fill="#111" /><path d="M2 0v3M5 0v3M1 3h5v2a2 2 0 01-5 0zM3.500 7v3" fill="#d5d5d5" stroke="#111" /></svg>
      <svg width="12" height="16" viewBox="0 0 12 16" fill="none" stroke="#222" className="ml-2" aria-hidden="true"><rect x="1.500" y="4.500" width="6" height="7" rx="1" /><path d="M7.500 7l3-1.500v5L7.500 9M2 2c2-1.500 4-1.500 6 0M2 14c2 1.500 4 1.500 6 0" /></svg>
      <Mic size={17} strokeWidth={1.5} fill="#111" className="ml-2" />
      <svg width="14" height="14" viewBox="0 0 14 14" fill="none" stroke="#333" className="ml-2" aria-hidden="true"><path d="M1 13C1 6 6 1 13 1M4 13c0-5 4-9 9-9M7 13c0-3.500 2.500-6 6-6" /><circle cx="12" cy="12" r="1.500" fill="#222" stroke="none" /></svg>
      <Volume2 size={16} strokeWidth={1.3} className="ml-2" />
      <span className="ml-[9px]">ENG</span>
      <span className="ml-2 flex flex-col items-center leading-4"><span>13:39</span><span>2026/08/20</span></span>
      <button aria-label="Notifications" className="relative ml-4 mr-2">
        <svg width="17" height="16" viewBox="0 0 17 16" aria-hidden="true"><path d="M1 1h14v10H7l-3 3v-3H1z" fill="#111" /><path d="M3.500 4h9M3.500 6.500h9M3.500 9h5" stroke="#ddd" /></svg>
        <span className="absolute -bottom-[7px] -right-[7px] flex size-4 items-center justify-center rounded-full border border-[#777] bg-[#d0d0d0] text-[10px]">10</span>
      </button>
    </div>
  </footer>
);

const App: React.FC = () => (
  <div className="flex h-screen min-h-[640px] flex-col overflow-hidden bg-[#333] font-['Noto_Sans',sans-serif]">
    <BrowserTabs />
    <AddressBar />
    <main className="mx-1 mb-[3px] flex min-h-0 flex-1 flex-col overflow-hidden rounded-lg bg-white">
      <ChartHeader />
      <div className="flex min-h-0 flex-1 border-t-[3px] border-[#ebebeb]">
        <LeftToolbar />
        <section className="flex min-w-0 flex-1 flex-col border-x-[3px] border-[#ebebeb]">
          <div className="flex min-h-0 flex-1">
            <ChartPane />
            <PriceAxis />
          </div>
          <TimeAxis />
          <RangeBar />
        </section>
        <RightSidebar />
      </div>
    </main>
    <Taskbar />
  </div>
);

export default App;
